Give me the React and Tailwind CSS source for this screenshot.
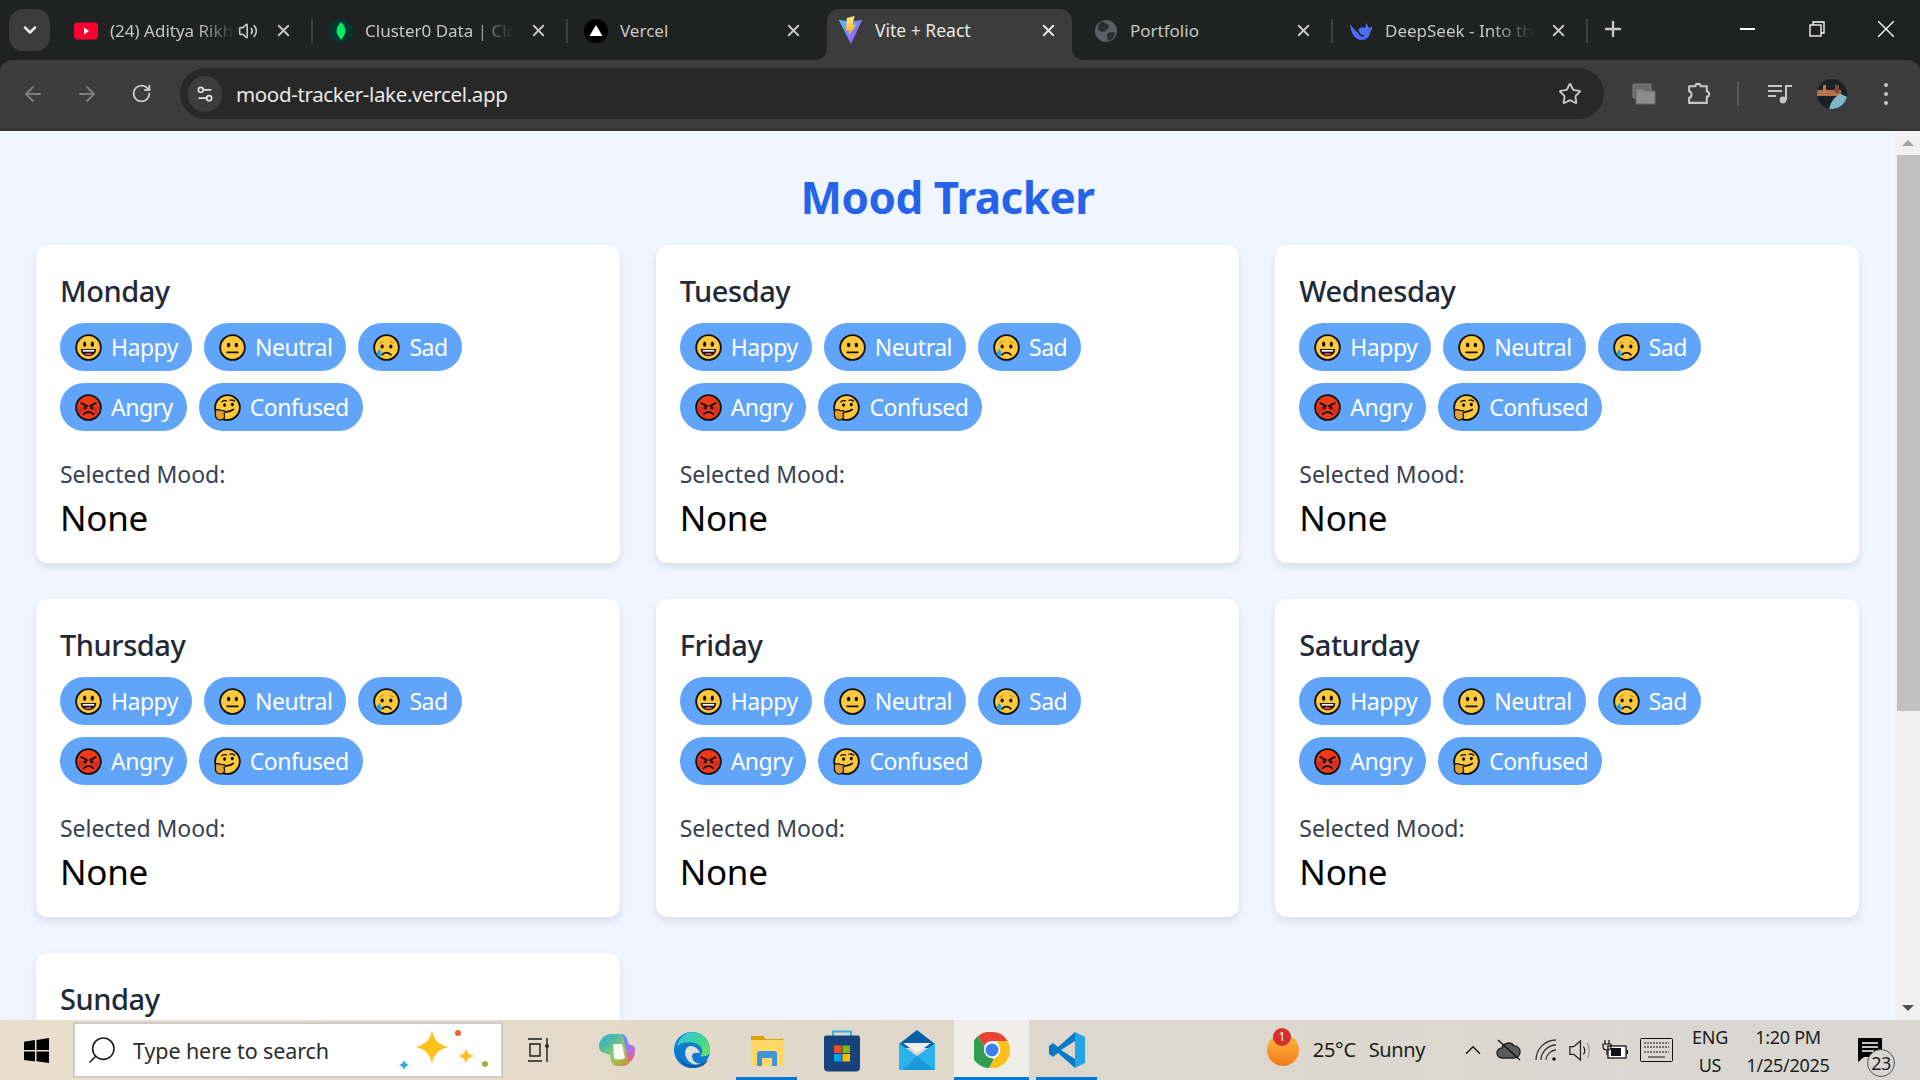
import { ArrowLeft, ArrowRight, ChevronDown, ChevronUp, Plus, RotateCw, Search, Settings2, Star, Volume2, X } from 'lucide-react';

const days = ['Monday', 'Tuesday', 'Wednesday', 'Thursday', 'Friday', 'Saturday', 'Sunday'];
const moods = ['Happy', 'Neutral', 'Sad', 'Angry', 'Confused'];

const Emoji = ({ mood }) => {
    const fill = mood === 'Angry' ? '#f03a17' : '#ffc83d';
    return (
        <svg viewBox="0 0 28 28" className="w-[27px] h-[27px] shrink-0">
            <circle cx="14" cy="14" r="12.8" fill={fill} stroke="#111" strokeWidth="1.9" />
            {mood === 'Happy' && (
                <>
                    <ellipse cx="10" cy="10.5" rx="1.7" ry="2.6" fill="#111" />
                    <ellipse cx="18" cy="10.5" rx="1.7" ry="2.6" fill="#111" />
                    <path d="M6 15.5h16c0 4.5-3.5 7.5-8 7.5s-8-3-8-7.5z" fill="#111" />
                    <path d="M8 16.5h12v1.8H8z" fill="#fff" />
                    <path d="M10 21c2-1.8 6-1.8 8 0-2 1.4-6 1.4-8 0z" fill="#e8465a" />
                </>
            )}
            {mood === 'Neutral' && (
                <>
                    <ellipse cx="10" cy="11.5" rx="1.8" ry="2.3" fill="#111" />
                    <ellipse cx="18" cy="11.5" rx="1.8" ry="2.3" fill="#111" />
                    <path d="M8.5 19h11" stroke="#111" strokeWidth="1.9" strokeLinecap="round" />
                </>
            )}
            {mood === 'Sad' && (
                <>
                    <path d="M6.5 9.5c1.5-.3 3-1.2 4-2.5M21.5 9.5c-1.5-.3-3-1.2-4-2.5" stroke="#c98a1b" strokeWidth="1.2" fill="none" />
                    <ellipse cx="9.5" cy="13" rx="1.7" ry="2" fill="#111" />
                    <ellipse cx="18.5" cy="13" rx="1.7" ry="2" fill="#111" />
                    <path d="M9.5 21.5c2-3 7-3 9 0" stroke="#111" strokeWidth="1.9" fill="none" strokeLinecap="round" />
                    <path d="M6.5 15.5c1.6 2.2 2.6 3.6 2.6 5a2.6 2.6 0 0 1-5.2 0c0-1.4 1-2.8 2.6-5z" fill="#29a3e0" />
                </>
            )}
            {mood === 'Angry' && (
                <>
                    <circle cx="5.5" cy="16.5" r="3.5" fill="#c92a2a" opacity="0.7" />
                    <circle cx="22.5" cy="16.5" r="3.5" fill="#c92a2a" opacity="0.7" />
                    <path d="M6.5 9.5l6 3M21.5 9.5l-6 3" stroke="#111" strokeWidth="2" strokeLinecap="round" />
                    <circle cx="10.5" cy="14.5" r="1.7" fill="#111" />
                    <circle cx="17.5" cy="14.5" r="1.7" fill="#111" />
                    <path d="M9 21c2.5-3 7.5-3 10 0" stroke="#111" strokeWidth="2" fill="none" strokeLinecap="round" />
                </>
            )}
            {mood === 'Confused' && (
                <>
                    <path d="M8 8c1.5-1.2 3.5-1.5 5-.8M16.5 6.5c1.5-.5 3.5-.2 5 1" stroke="#111" strokeWidth="1.3" fill="none" strokeLinecap="round" />
                    <ellipse cx="11" cy="11.5" rx="1.6" ry="1.9" fill="#111" />
                    <ellipse cx="19" cy="11" rx="1.6" ry="1.9" fill="#111" />
                    <path d="M13 18.5c2.5-.3 5-1.2 7-2.5" stroke="#111" strokeWidth="1.8" fill="none" strokeLinecap="round" />
                    <path d="M1.5 17c2-1 4-.8 5.5 0l4 .5c1.3.8.8 2.3-.5 2.5l.5 3.5c-.5 2-2 3.5-4.5 3.5-3.5 0-5.5-3-5-6z" fill="#e0a02a" stroke="#111" strokeWidth="1.3" />
                </>
            )}
        </svg>
    );
};

const DayCard = ({ day }) => (
    <div className="bg-white rounded-[12px] p-6 shadow-[0_4px_8px_rgba(0,0,0,0.1)]">
        <h2 className="text-[29px] leading-[44px] font-[550] text-[#1f2937] tracking-[-0.45px]">{day}</h2>
        <div className="flex flex-wrap gap-3 mt-[10px]">
            {moods.map((mood) => (
                <button key={mood} className="flex items-center gap-[9px] h-12 pl-[15px] pr-[14px] rounded-full bg-[#60a5fa] text-white text-[23px] tracking-[-0.5px]">
                    <Emoji mood={mood} />
                    <span>{mood}</span>
                </button>
            ))}
        </div>
        <p className="mt-[27px] text-[23px] leading-[32px] text-[#374151] tracking-[-0.05px]">Selected Mood:</p>
        <p className="mt-[7px] text-[35px] leading-[42px] text-black tracking-[-0.3px]">None</p>
    </div>
);

const Tab = ({ icon, title, fade, extra, active }) => (
    <div className="relative w-[255px] h-[60px] shrink-0">
        {active ? (
            <div className="relative h-[51px] mt-[9px] mx-[5px] pl-[11px] pr-[14px] pb-[8px] flex items-center bg-[#3c3c3c] rounded-t-[12px]">
                <svg viewBox="0 0 12 12" className="absolute w-3 h-3 -left-3 bottom-0"><path d="M12 0v12H0c7 0 12-5 12-12z" fill="#3c3c3c" /></svg>
                <svg viewBox="0 0 12 12" className="absolute w-3 h-3 -right-3 bottom-0"><path d="M0 0v12h12C5 12 0 7 0 0z" fill="#3c3c3c" /></svg>
                {icon}
                <span className="flex-1 ml-[12px] text-[17.5px] text-[#e8e8e8] whitespace-nowrap overflow-hidden">{title}</span>
                <X size={19} strokeWidth={2.4} className="text-[#e8e8e8]" />
            </div>
        ) : (
            <div className="h-[43px] mt-[9px] pl-[17px] pr-[19px] flex items-center">
                {icon}
                <span className={`flex-1 min-w-0 ml-[12px] text-[17px] text-[#c6c6c6] whitespace-nowrap overflow-hidden ${fade ? '[mask-image:linear-gradient(to_right,black_70%,transparent)]' : ''}`}>{title}</span>
                {extra}
                <X size={19} strokeWidth={2.4} className="text-[#c6c6c6] ml-[14px]" />
            </div>
        )}
    </div>
);

const Sep = () => <div className="w-[2px] h-6 mt-[19px] -mx-[1px] bg-[#3f4040] shrink-0 z-10" />;

const TabStrip = () => (
    <div className="flex h-[60px] bg-[#202222] text-[#c6c6c6]">
        <div className="w-[57px] shrink-0 pl-[9px] pt-[9px]">
            <div className="w-[41px] h-[42px] rounded-[14px] bg-[#3c3c3c] flex items-center justify-center">
                <ChevronDown size={20} strokeWidth={3} className="text-[#e6e6e6]" />
            </div>
        </div>
        <Tab
            title="(24) Aditya Rikhari"
            fade
            icon={<svg viewBox="0 0 24 17" className="w-6 h-[18px] shrink-0"><rect width="24" height="17" rx="4" fill="#ff0033" /><path d="M10 5l5 3.5-5 3.5z" fill="#fff" /></svg>}
            extra={<Volume2 size={20} className="text-[#c6c6c6] ml-[2px] mr-[2px]" />}
        />
        <Sep />
        <Tab
            title="Cluster0 Data | Cloud"
            fade
            icon={<svg viewBox="0 0 24 24" className="w-6 h-6 shrink-0"><circle cx="12" cy="12" r="12" fill="#023430" /><path d="M12 3c3 3 4.5 6 4.5 9S14 18 12 21c-2-3-4.5-6-4.5-9S9 6 12 3z" fill="#00ed64" /></svg>}
        />
        <Sep />
        <Tab
            title="Vercel"
            icon={<svg viewBox="0 0 24 24" className="w-6 h-6 shrink-0"><circle cx="12" cy="12" r="12" fill="#000" /><path d="M12 6l6.5 11h-13z" fill="#fff" /></svg>}
        />
        <Tab
            active
            title="Vite + React"
            icon={
                <svg viewBox="0 0 25 32" className="w-[25px] h-[30px] shrink-0">
                    <defs>
                        <linearGradient id="vitea" x1="0" y1="0" x2="1" y2="1"><stop offset="0" stopColor="#41d1ff" /><stop offset="1" stopColor="#bd34fe" /></linearGradient>
                        <linearGradient id="viteb" x1="0" y1="0" x2="0" y2="1"><stop offset="0" stopColor="#ffea83" /><stop offset="1" stopColor="#ffa800" /></linearGradient>
                    </defs>
                    <path d="M0 4l12.5 2.5L25 4 13 30z" fill="url(#vitea)" />
                    <path d="M17 0L8.5 2l-.8 14 3.5-.8-.8 6L18.5 9l-4 .8z" fill="url(#viteb)" />
                </svg>
            }
        />
        <Tab
            title="Portfolio"
            icon={<svg viewBox="0 0 24 24" className="w-6 h-6 shrink-0"><circle cx="12" cy="12" r="11" fill="#5b5e62" /><path d="M8 2c2 2 6 2 7 5s-3 3-4 5-5 0-7-1c0-4 1-7 4-9zM14 14c3-1 6-1 7 0-1 4-3 7-6 8-2-2-3-6-1-8z" fill="#2b2d2f" /></svg>}
        />
        <Sep />
        <Tab
            title="DeepSeek - Into the"
            fade
            icon={<svg viewBox="0 0 24 24" className="w-6 h-6 shrink-0"><path d="M1 5c1 10 5 16 12 16 5 0 8-4 8-8 2-1 2-3 2-6-1 1-2 2-3 2-1-2-2-4-3-5 0 2 0 3-1 5-3-2-7 0-7 4-3-1-5-4-8-8z" fill="#4d6bfe" /><path d="M9 12c1 3 3 5 6 5" stroke="#202222" strokeWidth="1.6" fill="none" /></svg>}
        />
        <Sep />
        <div className="w-[52px] shrink-0 flex items-center justify-center pb-[2px]">
            <Plus size={24} strokeWidth={2.4} className="text-[#c6c6c6]" />
        </div>
        <div className="flex-1" />
        <div className="w-[69px] flex items-center justify-center">
            <div className="w-[15px] h-[2px] bg-white mb-[2px]" />
        </div>
        <div className="w-[69px] flex items-center justify-center">
            <svg viewBox="0 0 16 16" className="w-4 h-4 mb-[2px]" fill="none" stroke="#fff" strokeWidth="1.3"><rect x="1" y="4" width="11" height="11" /><path d="M4 4V1h11v11h-3" /></svg>
        </div>
        <div className="w-[69px] flex items-center justify-center">
            <svg viewBox="0 0 16 16" className="w-4 h-4 mb-[2px]" stroke="#fff" strokeWidth="1.3"><path d="M0 0l16 16M16 0L0 16" /></svg>
        </div>
    </div>
);

const Toolbar = () => (
    <div className="flex items-center h-[71px] pb-[2px] pl-[6px] bg-[#3c3c3c] rounded-t-[12px] border-b-2 border-[#343434] relative">
        <div className="w-[54px] flex justify-center"><ArrowLeft size={24} className="text-[#7d7d7d]" /></div>
        <div className="w-[54px] flex justify-center"><ArrowRight size={24} className="text-[#7d7d7d]" /></div>
        <div className="w-[54px] flex justify-center"><RotateCw size={21} strokeWidth={2.2} className="text-[#c6c6c6]" /></div>
        <div className="ml-[12px] w-[1424px] h-[51px] rounded-full bg-[#282828] flex items-center pl-[8px] pr-[22px]">
            <div className="w-[34px] h-[36px] rounded-full bg-[#3c3c3c] flex items-center justify-center">
                <Settings2 size={20} className="text-[#e0e0e0]" />
            </div>
            <span className="ml-[14px] pt-[2px] text-[20.5px] text-[#e8e8e8] tracking-[-0.35px]">mood-tracker-lake.vercel.app</span>
            <div className="flex-1" />
            <Star size={24} strokeWidth={1.9} className="text-[#c6c6c6]" />
        </div>
        <div className="ml-[13px] w-[54px] flex justify-center">
            <svg viewBox="0 0 24 22" className="w-[24px] h-[22px]"><rect x="1" y="1" width="18" height="14" rx="1" fill="#6b6b6b" stroke="#7f7f7f" /><path d="M4 6h7l2 2h10v13H4z" fill="#8c8c8c" stroke="#6b6b6b" /></svg>
        </div>
        <div className="w-[54px] flex justify-center">
            <svg viewBox="0 0 24 24" className="w-[25px] h-[25px]" fill="none" stroke="#c6c6c6" strokeWidth="2" strokeLinejoin="round"><path d="M3 5h6c0-3 5-3 5 0h6v5c3 0 3 5 0 5v6H3v-5c3 0 3-6 0-6z" /></svg>
        </div>
        <div className="w-[2px] h-6 mx-[12px] bg-[#5a5a5a]" />
        <div className="w-[54px] flex justify-center">
            <svg viewBox="0 0 24 20" className="w-[24px] h-[20px] ml-[3px]" fill="none" stroke="#c6c6c6" strokeWidth="2"><path d="M0 2h14M0 7h14M0 12h8M18 16V2h6" /><circle cx="15" cy="16" r="3.4" fill="#c6c6c6" stroke="none" /></svg>
        </div>
        <div className="w-[54px] flex justify-center">
            <svg viewBox="0 0 30 30" className="w-[30px] h-[30px]">
                <clipPath id="avatar"><circle cx="15" cy="15" r="15" /></clipPath>
                <g clipPath="url(#avatar)">
                    <rect width="30" height="30" fill="#1a2024" />
                    <rect y="11" width="24" height="6" fill="#b5714d" />
                    <rect x="6" y="6" width="3" height="8" fill="#c7794c" />
                    <rect x="18" y="6" width="4" height="8" fill="#7b4c3a" />
                    <path d="M12 30c2-8 6-13 12-15l6 3v12z" fill="#7fb8c8" />
                </g>
            </svg>
        </div>
        <div className="w-[54px] flex flex-col items-center gap-[5px]">
            <div className="w-1 h-1 rounded-full bg-[#c6c6c6]" />
            <div className="w-1 h-1 rounded-full bg-[#c6c6c6]" />
            <div className="w-1 h-1 rounded-full bg-[#c6c6c6]" />
        </div>
    </div>
);

const Scrollbar = () => (
    <div className="w-[25px] shrink-0 bg-[#f1f1f1] flex flex-col items-center">
        <div className="h-[24px] flex items-center justify-center">
            <div className="w-0 h-0 border-x-[6px] border-x-transparent border-b-[6px] border-b-[#a3a3a3]" />
        </div>
        <div className="w-[23px] h-[556px] ml-[2px] bg-[#c1c1c1]" />
        <div className="flex-1" />
        <div className="h-[24px] flex items-center justify-center">
            <div className="w-0 h-0 border-x-[6px] border-x-transparent border-t-[6px] border-t-[#505050]" />
        </div>
    </div>
);

const TaskCell = ({ children, line, active }) => (
    <div className={`relative w-[75px] h-full flex items-center justify-center ${active ? 'bg-[#f1eeea]' : ''}`}>
        {children}
        {line && <div className={`absolute bottom-0 h-[3px] bg-[#0078d4] ${active ? 'inset-x-0' : 'left-[7px] right-[7px]'}`} />}
    </div>
);

const Taskbar = () => (
    <div className="flex items-center h-[60px] shrink-0 bg-gradient-to-r from-[#e9dfcc] via-[#dfd7ca] to-[#d9d7d4] text-[#1c1c1c]">
        <div className="w-[73px] flex justify-center">
            <svg viewBox="0 0 24 24" className="w-[25px] h-[25px]"><path d="M0 3.5l10.5-1.5v9.5H0zM12 1.8L24 0v11.5H12zM0 13h10.5v9.5L0 21zM12 13h12v11l-12-1.8z" fill="#000" /></svg>
        </div>
        <div className="w-[430px] h-[56px] bg-white border-2 border-[#cccccc] flex items-center pl-[11px]">
            <Search size={32} strokeWidth={1.2} className="text-[#1c1c1c] -scale-x-100" />
            <span className="ml-[15px] pt-[2px] text-[21.5px] text-[#2b2b2b] tracking-[-0.1px]">Type here to search</span>
            <div className="flex-1" />
            <svg viewBox="0 0 90 44" className="w-[90px] h-[44px] mr-[13px]">
                <path d="M34 2c2 10 6 14 16 17-10 3-14 7-16 17-2-10-6-14-16-17 10-3 14-7 16-17z" fill="#fdc21c" />
                <path d="M68 20c1 5 3 7 8 8-5 1-7 3-8 8-1-5-3-7-8-8 5-1 7-3 8-8z" fill="#fbbf24" />
                <path d="M6 32c1 3 2 4 5 5-3 1-4 2-5 5-1-3-2-4-5-5 3-1 4-2 5-5z" fill="#25a9f0" />
                <circle cx="60" cy="5" r="3" fill="#f2602d" />
                <circle cx="87" cy="36" r="3" fill="#86bc3b" />
            </svg>
        </div>
        <div className="flex items-center h-full ml-[1px]">
            <TaskCell>
                <svg viewBox="0 0 24 28" className="w-[24px] h-[28px] -ml-[5px]" fill="none" stroke="#1c1c1c" strokeWidth="1.4"><path d="M1 3h14M1 25h14M3 8h10v12H3zM20 2v6M20 12v14" /><circle cx="20" cy="10" r="1.2" fill="#1c1c1c" /></svg>
            </TaskCell>
            <TaskCell>
                <svg viewBox="0 0 36 36" className="w-[36px] h-[36px]">
                    <defs>
                        <linearGradient id="copilot" x1="0" y1="0" x2="1" y2="1"><stop offset="0" stopColor="#1ea7e8" /><stop offset="0.55" stopColor="#8ccf5e" /><stop offset="1" stopColor="#f2773c" /></linearGradient>
                        <linearGradient id="copilotb" x1="0" y1="0" x2="0" y2="1"><stop offset="0" stopColor="#3aa6f0" /><stop offset="0.6" stopColor="#c06be8" /><stop offset="1" stopColor="#f05a7a" /></linearGradient>
                    </defs>
                    <path d="M12 2h10l3 8 8 3c2 1 3 3 3 5 0 6-2 10-5 12-2 3-4 4-7 4h-6c-3 0-5-2-6-5l-1-6-6-2C2 20 0 18 0 14 0 8 6 2 12 2z" fill="url(#copilot)" />
                    <path d="M22 2c3 0 5 2 6 5l2 6h2c2 0 4 2 4 5 0 5-3 10-6 12l-5-20c-1-4-2-7-3-8z" fill="url(#copilotb)" />
                    <path d="M14 12h9l3 14c-3 2-9 2-11 0z" fill="#fff" opacity="0.92" />
                </svg>
            </TaskCell>
            <TaskCell>
                <svg viewBox="0 0 36 36" className="w-[36px] h-[36px]">
                    <defs>
                        <linearGradient id="edge" x1="0" y1="0" x2="1" y2="1"><stop offset="0" stopColor="#35c1f1" /><stop offset="0.6" stopColor="#40d88a" /><stop offset="1" stopColor="#7be06a" /></linearGradient>
                    </defs>
                    <circle cx="18" cy="18" r="18" fill="#0c7bd0" />
                    <path d="M3 14C5 5 12 0 18 0c10 0 18 7 18 18 0 6-6 7-10 6 3-2 3-7 0-10-5-5-17-5-23 0z" fill="url(#edge)" />
                    <path d="M17 14c-5 0-8 6-4 13 3 5 9 7 15 5-6 0-10-3-10-8 0-3 3-4 8-3-2-4-5-7-9-7z" fill="#e2ded8" />
                    <path d="M34 28c-3 6-9 8-15 8-7 0-14-6-15-14 3 7 8 11 14 11 6 0 11-1 16-5z" fill="#0a5aa8" />
                </svg>
            </TaskCell>
            <TaskCell line>
                <svg viewBox="0 0 32 32" className="w-[32px] h-[32px]">
                    <path d="M0 2h12l3 3h17v3H0z" fill="#e0a000" />
                    <path d="M0 6h32v24c0 1-1 2-2 2H2c-1 0-2-1-2-2z" fill="#ffd866" />
                    <path d="M6 32V20c0-2 1-3 3-3h14c2 0 3 1 3 3v12h-5v-8H11v8z" fill="#3f94d9" />
                </svg>
            </TaskCell>
            <TaskCell>
                <svg viewBox="0 0 36 42" className="w-[36px] h-[43px]">
                    <path d="M9 8V2h18v6" fill="none" stroke="#2cb4e8" strokeWidth="2" />
                    <path d="M2 6h32a2 2 0 0 1 2 2v30a4 4 0 0 1-4 4H4a4 4 0 0 1-4-4V8a2 2 0 0 1 2-2z" fill="#18427c" />
                    <rect x="10" y="16" width="7.5" height="7.5" fill="#f25022" />
                    <rect x="18.5" y="16" width="7.5" height="7.5" fill="#7fba00" />
                    <rect x="10" y="24.5" width="7.5" height="7.5" fill="#00a4ef" />
                    <rect x="18.5" y="24.5" width="7.5" height="7.5" fill="#ffb900" />
                </svg>
            </TaskCell>
            <TaskCell>
                <svg viewBox="0 0 36 40" className="w-[36px] h-[40px]">
                    <path d="M0 14L18 0l18 14v4H0z" fill="#0a5ea8" />
                    <path d="M4 13h28l-14 10z" fill="#f1eeea" />
                    <path d="M0 13l18 13 18-13v27H0z" fill="#2ab2ee" />
                    <path d="M36 40H4l14-14z" fill="#1488d0" opacity="0.6" />
                </svg>
            </TaskCell>
            <TaskCell line active>
                <svg viewBox="0 0 36 36" className="w-[36px] h-[36px]">
                    <path d="M18 0a18 18 0 0 1 15.6 9H18a9 9 0 0 0-8 5L4 4a18 18 0 0 1 14-4z" fill="#ea4335" />
                    <path d="M4 4l9 15a9 9 0 0 0 7 8l-5 9A18 18 0 0 1 4 4z" fill="#2f9e4f" />
                    <path d="M33.6 9A18 18 0 0 1 15 36l6-10a9 9 0 0 0 4-12 9 9 0 0 0-2-5z" fill="#fbc116" />
                    <circle cx="18" cy="18" r="8" fill="#fff" />
                    <circle cx="18" cy="18" r="6.5" fill="#3b7ff0" />
                </svg>
            </TaskCell>
            <TaskCell line>
                <svg viewBox="0 0 36 36" className="w-[36px] h-[36px]">
                    <path d="M26 0l10 5v26l-10 5z" fill="#23a5e8" />
                    <path d="M26 0v9L12 18l14 9v9L9 21l-5 4-4-3v-8l4-3 5 4z" fill="#0a7ac8" />
                </svg>
            </TaskCell>
        </div>
        <div className="flex-1" />
        <div className="relative w-[32px] h-[32px] rounded-full bg-gradient-to-b from-[#fbb73c] to-[#f27a1a]">
            <div className="absolute -top-[6px] left-[6px] w-[18px] h-[18px] rounded-full bg-[#d32f2f] text-white text-[12px] leading-[18px] text-center">1</div>
        </div>
        <span className="ml-[14px] text-[20px] tracking-[-0.3px]">25°C</span>
        <span className="ml-[13px] text-[20px] tracking-[-0.4px]">Sunny</span>
        <ChevronUp size={26} strokeWidth={1.4} className="ml-[35px]" />
        <svg viewBox="0 0 26 22" className="ml-[10px] w-[26px] h-[22px]"><path d="M6 19a5 5 0 0 1 0-10c1-5 9-7 12-2 4 0 6 3 6 6s-2 6-6 6z" fill="#5c5c5c" stroke="#222" strokeWidth="1.4" /><path d="M2 1l22 20" stroke="#111" strokeWidth="1.4" /></svg>
        <svg viewBox="0 0 24 24" className="ml-[12px] w-[24px] h-[24px]" fill="none" stroke="#333" strokeWidth="1.3"><path d="M2 22C2 11 11 2 22 2M7 22c0-8 7-15 15-15M12 22c0-5 5-10 10-10" /><circle cx="20" cy="21" r="1.8" fill="#111" stroke="none" /></svg>
        <svg viewBox="0 0 24 24" className="ml-[10px] w-[23px] h-[23px]" fill="none" stroke="#222" strokeWidth="1.3"><path d="M2 8h4l7-6v20l-7-6H2zM16 8c2 2 2 6 0 8" /><path d="M20 4c3 4 3 12 0 16" stroke="#999" /></svg>
        <svg viewBox="0 0 26 22" className="ml-[11px] w-[26px] h-[22px]"><rect x="6" y="7" width="18" height="12" fill="#fff" stroke="#111" strokeWidth="1.3" /><rect x="9" y="9" width="10" height="8" fill="#111" /><rect x="24.5" y="11" width="1.5" height="4" fill="#111" /><path d="M3 1v4M7 1v4M1 5h8v3c0 2-2 3-4 3s-4-1-4-3zM5 11v5" stroke="#111" strokeWidth="1.2" fill="none" /></svg>
        <svg viewBox="0 0 33 24" className="ml-[12px] w-[33px] h-[24px]" fill="none" stroke="#111" strokeWidth="1"><rect x="0.5" y="0.5" width="32" height="23" rx="1" /><path d="M4 5h25M4 9h25M4 14h25" strokeDasharray="2 1" /><path d="M8 19h17" /></svg>
        <div className="ml-[12px] mt-[2px] w-[50px] flex flex-col items-center text-[18px] leading-[28px] tracking-[-0.3px]">
            <span>ENG</span>
            <span>US</span>
        </div>
        <div className="-ml-[1px] mt-[2px] w-[108px] flex flex-col items-center text-[18px] leading-[28px] tracking-[-0.3px]">
            <span>1:20 PM</span>
            <span>1/25/2025</span>
        </div>
        <div className="relative ml-[16px] mr-[38px] w-[24px] h-[24px]">
            <svg viewBox="0 0 24 24" className="w-[24px] h-[24px]"><path d="M0 0h24v19H6l-6 5z" fill="#000" /><path d="M4 5h16M4 9h16M4 13h12" stroke="#fff" strokeWidth="1.3" /></svg>
            <div className="absolute left-[9px] top-[11px] w-[28px] h-[28px] rounded-full bg-[#d8d6d2] border border-[#555] flex items-center justify-center text-[18px] tracking-[-0.5px]">23</div>
        </div>
    </div>
);

export default function App() {
    return (
        <div className="w-full h-screen flex flex-col overflow-hidden font-['Noto_Sans',sans-serif]">
            <div className="shrink-0 bg-[#202222]">
                <TabStrip />
                <Toolbar />
            </div>
            <div className="flex-1 min-h-0 flex bg-[#eff6ff]">
                <div className="flex-1 min-w-0 overflow-hidden px-9 pt-[39px]">
                    <h1 className="text-center text-[44px] leading-[54px] font-bold text-[#2563eb] tracking-[-0.5px] mb-[21px]">Mood Tracker</h1>
                    <div className="grid grid-cols-3 gap-9">
                        {days.map((day) => (
                            <DayCard key={day} day={day} />
                        ))}
                    </div>
                </div>
                <Scrollbar />
            </div>
            <Taskbar />
        </div>
    );
}
